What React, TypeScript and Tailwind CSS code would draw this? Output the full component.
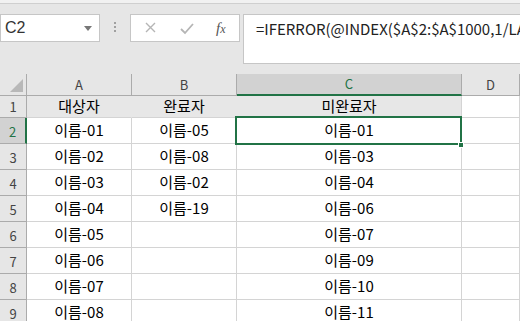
const font = { fontFamily: '"Noto Sans CJK KR", "Noto Sans", sans-serif' }

const colA = ['이름-01', '이름-02', '이름-03', '이름-04', '이름-05', '이름-06', '이름-07', '이름-08']
const colB = ['이름-05', '이름-08', '이름-02', '이름-19', '', '', '', '']
const colC = ['이름-01', '이름-03', '이름-04', '이름-06', '이름-07', '이름-09', '이름-10', '이름-11']

function FormulaBar() {
  return (
    <div className="h-[74px] overflow-hidden bg-[#e6e6e6]">
      <div className="h-[4px] border-b border-[#cfcfcf] bg-[#f1f1f1]" />
      <div className="flex items-start pt-[10px]">
        <div className="flex h-[28px] w-[100px] shrink-0 items-center justify-between border border-[#c6c6c6] bg-white pl-[4px] pr-[7px]">
          <span className="text-[16px] text-[#333]" style={{ fontFamily: '"Liberation Sans", sans-serif' }}>
            C2
          </span>
          <span className="h-0 w-0 border-x-[4px] border-t-[5px] border-x-transparent border-t-[#777]" />
        </div>
        <div className="flex w-[30px] shrink-0 flex-col items-center gap-[2px] pt-[8px]">
          <span className="h-[2px] w-[2px] bg-[#a0a0a0]" />
          <span className="h-[2px] w-[2px] bg-[#a0a0a0]" />
          <span className="h-[2px] w-[2px] bg-[#a0a0a0]" />
        </div>
        <div className="flex h-[28px] w-[110px] shrink-0 items-center border border-[#c6c6c6] bg-white">
          <svg width="34" height="26" viewBox="0 0 34 26" className="ml-[4px] shrink-0">
            <path d="M11 8l9 9M20 8l-9 9" stroke="#b5b5b5" strokeWidth="1.4" fill="none" />
          </svg>
          <svg width="34" height="26" viewBox="0 0 34 26" className="shrink-0">
            <path d="M12 14l4 4 8-9" stroke="#b5b5b5" strokeWidth="1.8" fill="none" />
          </svg>
          <span className="ml-[13px] text-[15px] italic text-[#555]" style={{ fontFamily: '"Liberation Serif", serif' }}>
            f<span className="text-[12px]">x</span>
          </span>
        </div>
        <div className="-mr-[6px] ml-[3px] h-[50px] min-w-0 flex-1 overflow-hidden border border-[#c6c6c6] bg-white pl-[12px] pt-[2px]">
          <span className="whitespace-nowrap text-[15px] text-[#222]" style={font}>
            =IFERROR(@INDEX($A$2:$A$1000,1/LARGE(ISERROR(MATCH($A$2:$A$1000,$B$2:$B$1000,0))
          </span>
        </div>
      </div>
    </div>
  )
}

function Sheet() {
  const cell = 'flex items-center justify-center border-b border-r border-[#d4d4d4] text-[15px] text-black'
  const rowHead = 'flex items-center justify-center border-b border-r border-[#ababab] bg-[#e6e6e6] text-[13px] text-[#444]'
  const colHead = 'flex items-center justify-center border-b border-r border-[#ababab] bg-[#e6e6e6] text-[13px] text-[#444]'
  return (
    <div className="relative grid grid-cols-[27px_105px_105px_225px_1fr] grid-rows-[22px_22px_repeat(8,26px)] bg-white" style={font}>
      <div className="relative border-b border-r border-[#ababab] bg-[#e6e6e6]">
        <span className="absolute bottom-[3px] right-[3px] h-0 w-0 border-b-[13px] border-l-[13px] border-b-[#b8b8b8] border-l-transparent" />
      </div>
      <div className={colHead}>A</div>
      <div className={colHead}>B</div>
      <div className="flex items-center justify-center border-b-2 border-r border-b-[#217346] border-r-[#ababab] bg-[#d2d2d2] text-[13px] text-[#217346]">C</div>
      <div className={colHead}>D</div>

      <div className={rowHead}>1</div>
      <div className={cell + ' bg-[#e7e7e7] border-r-[#e7e7e7]'}>대상자</div>
      <div className={cell + ' bg-[#e7e7e7] border-r-[#e7e7e7]'}>완료자</div>
      <div className={cell + ' bg-[#e7e7e7]'}>미완료자</div>
      <div className={cell} />

      {colA.map((a, i) => (
        <div key={i} className="contents">
          <div
            className={
              i === 0
                ? 'flex items-center justify-center border-b border-r-2 border-b-[#ababab] border-r-[#217346] bg-[#d2d2d2] pt-[3px] text-[13px] text-[#217346]'
                : rowHead + ' pt-[3px]'
            }
          >
            {i + 2}
          </div>
          <div className={cell}>{a}</div>
          <div className={cell}>{colB[i]}</div>
          <div className={cell}>{colC[i]}</div>
          <div className={cell} />
        </div>
      ))}

      <div className="pointer-events-none absolute left-[235px] top-[42px] h-[29px] w-[227px] border-2 border-[#217346]" />
      <div className="absolute left-[458px] top-[68px] h-[6px] w-[6px] border border-white bg-[#217346]" />
    </div>
  )
}

export default function App() {
  return (
    <div className="h-[321px] w-[520px] overflow-hidden bg-[#e6e6e6]">
      <FormulaBar />
      <Sheet />
    </div>
  )
}
